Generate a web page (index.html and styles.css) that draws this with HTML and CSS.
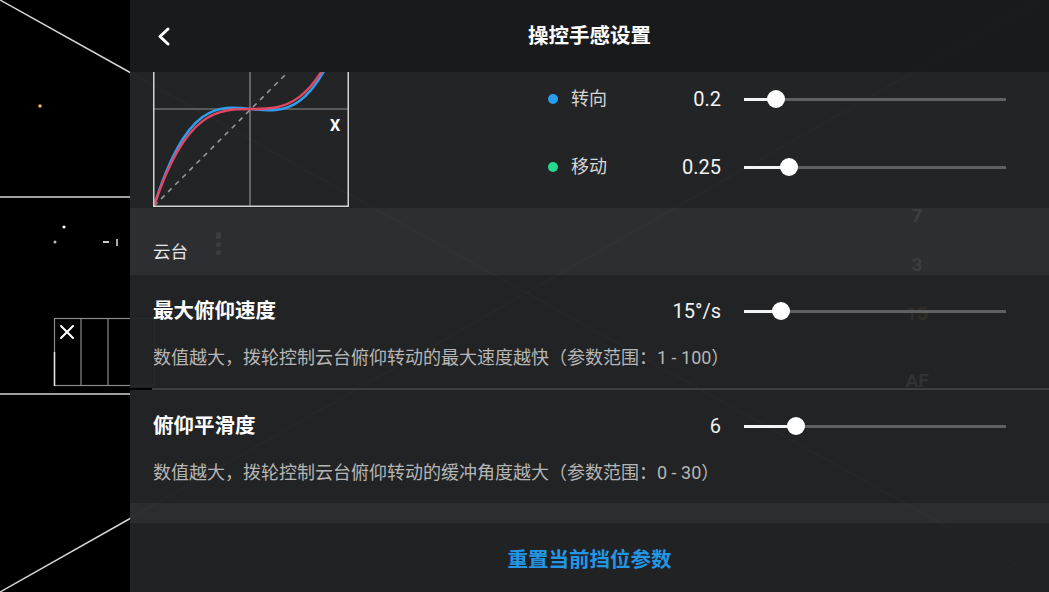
FILE: index.html
```html
<!DOCTYPE html>
<html lang="zh-CN">
<head>
    <meta charset="UTF-8">
    <meta name="viewport" content="width=device-width, initial-scale=1.0">
    <title>操控手感设置</title>

    <link rel="stylesheet" href="styles.css">
</head>
<body>
    <div class="screen">
        <div class="camera">
            <svg class="camera-grid" width="1049" height="592" viewBox="0 0 1049 592">
                <g stroke="#d4d4d4" stroke-width="1.5" fill="none">
                    <line x1="0" y1="0" x2="131" y2="73"/>
                    <line x1="0" y1="592" x2="131" y2="518"/>
                    <line x1="0" y1="197" x2="131" y2="197"/>
                    <line x1="0" y1="394" x2="131" y2="394"/>
                </g>
                <g stroke="#d4d4d4" stroke-width="1.5" stroke-opacity="0.3" fill="none">
                    <line x1="131" y1="73" x2="1049" y2="583"/>
                    <line x1="131" y1="518" x2="1049" y2="-5"/>
                </g>
                <g stroke="#8a8a8a" stroke-width="1.2" fill="none">
                    <rect x="54.5" y="318.5" width="100" height="67"/>
                    <line x1="81" y1="318" x2="81" y2="386"/>
                    <line x1="108" y1="318" x2="108" y2="386"/>
                </g>
                <line x1="54.5" y1="352" x2="54.5" y2="386" stroke="#e6e6e6" stroke-width="1.5"/>
                <g stroke="#fff" stroke-width="2" stroke-linecap="round">
                    <line x1="61" y1="326" x2="73" y2="338"/>
                    <line x1="73" y1="326" x2="61" y2="338"/>
                </g>
                <circle cx="40" cy="106" r="1.8" fill="#f0b070"/>
                <circle cx="64" cy="227" r="1.6" fill="#fff"/>
                <circle cx="55" cy="242" r="1.5" fill="#bbb"/>
                <rect x="103" y="241" width="6" height="2" fill="#ccc"/>
                <rect x="116" y="239" width="2" height="7" fill="#aaa"/>
                <g fill="#fff">
                    <rect x="216" y="232" width="5" height="7" rx="2"/>
                    <rect x="216" y="242" width="5" height="5" rx="2"/>
                    <rect x="216" y="250" width="5" height="5" rx="2"/>
                </g>
                <g class="scale-marks" text-anchor="middle">
                    <text x="917" y="222">7</text>
                    <text x="917" y="271">3</text>
                    <text class="warm" x="917" y="320">15</text>
                    <text x="917" y="387">AF</text>
                </g>
            </svg>
        </div>

        <div class="panel">
            <header class="topbar">
                <button class="back">
                    <svg width="18" height="21" viewBox="0 0 18 21">
                        <path d="M13 3 L5 10.5 L13 18" fill="none" stroke="#fff" stroke-width="3" stroke-linecap="round" stroke-linejoin="round"/>
                    </svg>
                </button>
                <h1 class="title">操控手感设置</h1>
                <span></span>
            </header>

            <div class="scroller">
                <section class="curve-block">
                    <svg class="curve" width="196" height="196" viewBox="0 0 196 196">
                        <line x1="97" y1="0" x2="97" y2="196" stroke="#8e8e8e" stroke-width="1.2"/>
                        <line x1="0" y1="98" x2="196" y2="98" stroke="#8e8e8e" stroke-width="1.2"/>
                        <line x1="1" y1="195" x2="195" y2="1" stroke="#9c9c9c" stroke-width="1.5" stroke-dasharray="5 5"/>
                        <path d="M1 195 C65.7 -13.5 130.3 209.5 195 1" fill="none" stroke="#2d9ff0" stroke-width="2.5"/>
                        <path d="M1 195 C65.7 1 130.3 195 195 1" fill="none" stroke="#e3475f" stroke-width="2.5"/>
                        <rect x="0.75" y="0.75" width="194.5" height="194.5" fill="none" stroke="#d2d2d2" stroke-width="1.5"/>
                        <text class="axis-label" x="182" y="120" text-anchor="middle">X</text>
                    </svg>

                    <ul class="axis-list">
                        <li class="axis">
                            <i class="dot blue"></i>
                            <span class="name">转向</span>
                            <span class="value">0.2</span>
                            <div class="slider">
                                <div class="track"><div class="fill" style="width: 12.2%"></div></div>
                                <div class="knob" style="left: 12.2%"></div>
                            </div>
                        </li>
                        <li class="axis">
                            <i class="dot green"></i>
                            <span class="name">移动</span>
                            <span class="value">0.25</span>
                            <div class="slider">
                                <div class="track"><div class="fill" style="width: 17.2%"></div></div>
                                <div class="knob" style="left: 17.2%"></div>
                            </div>
                        </li>
                    </ul>
                </section>

                <div class="group-title">云台</div>

                <div class="setting">
                    <div class="setting-head">
                        <span class="setting-name">最大俯仰速度</span>
                        <span class="value">15°/s</span>
                        <div class="slider">
                            <div class="track"><div class="fill" style="width: 14.1%"></div></div>
                            <div class="knob" style="left: 14.1%"></div>
                        </div>
                    </div>
                    <p class="setting-desc">数值越大，拨轮控制云台俯仰转动的最大速度越快（参数范围：1 - 100）</p>
                </div>
                <div class="divider"></div>
                <div class="setting">
                    <div class="setting-head">
                        <span class="setting-name">俯仰平滑度</span>
                        <span class="value">6</span>
                        <div class="slider">
                            <div class="track"><div class="fill" style="width: 20%"></div></div>
                            <div class="knob" style="left: 20%"></div>
                        </div>
                    </div>
                    <p class="setting-desc">数值越大，拨轮控制云台俯仰转动的缓冲角度越大（参数范围：0 - 30）</p>
                </div>
                <div class="band"></div>
            </div>

            <footer class="reset">重置当前挡位参数</footer>
        </div>
    </div>
</body>
</html>
```

FILE: styles.css
```css
* {
    box-sizing: border-box;
}
body {
    margin: 0;
    background-color: #000;
    font-family: Roboto, "Noto Sans CJK SC", sans-serif;
    color: #fff;
}
.screen {
    position: relative;
    width: 1049px;
    height: 592px;
    overflow: hidden;
    background-color: #000;
}
.camera {
    position: absolute;
    top: 0;
    left: 0;
    right: 0;
    bottom: 0;
}
.camera-grid {
    display: block;
}
.scale-marks text {
    font-family: Roboto, sans-serif;
    font-weight: 700;
    font-size: 19px;
    fill: #fff;
}
.scale-marks .warm {
    fill: #ffae40;
}
.panel {
    position: relative;
    margin-left: 130px;
    height: 592px;
    display: flex;
    flex-direction: column;
}
.topbar {
    height: 72px;
    flex-shrink: 0;
    display: grid;
    grid-template-columns: 1fr auto 1fr;
    align-items: center;
    background-color: rgba(26, 27, 29, 0.96);
}
.back {
    justify-self: start;
    display: flex;
    margin-left: 25px;
    padding: 0;
    border: none;
    background: none;
    cursor: pointer;
}
.title {
    margin: 0;
    font-size: 20.5px;
    line-height: 24px;
    font-weight: 700;
    color: #fff;
}
.scroller {
    flex: 1;
    overflow: hidden;
}
.curve-block {
    display: flex;
    align-items: flex-start;
    height: 208px;
    margin-top: -72px;
    background-color: rgba(37, 38, 39, 0.94);
}
.curve {
    display: block;
    margin: 11px 0 0 23px;
}
.axis-label {
    font-family: Roboto, sans-serif;
    font-weight: 700;
    font-size: 16px;
    fill: #fff;
}
.axis-list {
    list-style: none;
    width: 458px;
    margin: 0 43px 0 auto;
    padding: 68px 0 0;
    display: flex;
    flex-direction: column;
    gap: 6px;
}
.axis {
    height: 62px;
    display: flex;
    align-items: center;
}
.dot {
    width: 10px;
    height: 10px;
    border-radius: 50%;
}
.dot.blue {
    background-color: #2a9bf0;
}
.dot.green {
    background-color: #22db8c;
}
.name {
    flex: 1;
    margin-left: 13px;
    font-size: 18px;
    line-height: 24px;
    color: #d6d6d6;
}
.value {
    font-size: 20px;
    line-height: 24px;
    color: #f2f2f2;
}
.slider {
    position: relative;
    width: 262px;
    height: 18px;
    margin-left: 23px;
    display: flex;
    align-items: center;
}
.track {
    width: 100%;
    height: 3px;
    background-color: #5e6062;
}
.fill {
    height: 3px;
    background-color: #f4f4f4;
}
.knob {
    position: absolute;
    top: 50%;
    width: 18px;
    height: 18px;
    border-radius: 50%;
    background-color: #fff;
    transform: translate(-50%, -50%);
}
.group-title {
    padding: 32px 23px 11px;
    font-size: 17.5px;
    line-height: 24px;
    color: #e6e6e6;
    background-color: rgba(47, 49, 52, 0.94);
}
.setting {
    padding: 24px 43px 18px 23px;
    background-color: rgba(36, 37, 38, 0.94);
}
.setting-head {
    display: flex;
    align-items: center;
    height: 24px;
}
.setting-name {
    flex: 1;
    font-size: 20.5px;
    line-height: 24px;
    font-weight: 700;
    color: #fff;
}
.setting-desc {
    margin: 23px 0 0;
    font-size: 18px;
    line-height: 24px;
    color: #b6b6b6;
    white-space: nowrap;
}
.divider {
    height: 2px;
    padding-left: 22px;
    background-color: rgba(36, 37, 38, 0.94);
    background-image: linear-gradient(#3c3e41, #3c3e41);
    background-origin: content-box;
    background-clip: content-box;
}
.band {
    height: 20px;
    background-color: rgba(46, 48, 51, 0.94);
}
.reset {
    height: 69px;
    flex-shrink: 0;
    display: flex;
    justify-content: center;
    align-items: center;
    font-size: 20.5px;
    font-weight: 700;
    color: #2396e6;
    background-color: rgba(34, 35, 37, 0.96);
}
```
